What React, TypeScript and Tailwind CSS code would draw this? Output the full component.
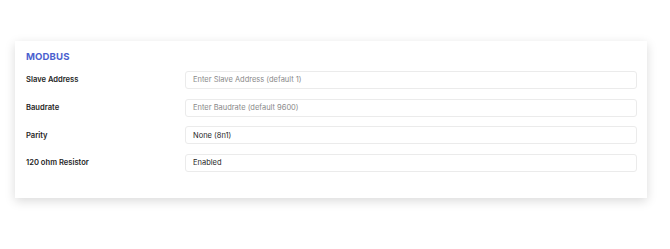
const rows = [
  { label: "Slave Address", value: "", placeholder: "Enter Slave Address (default 1)" },
  { label: "Baudrate", value: "", placeholder: "Enter Baudrate (default 9600)" },
  { label: "Parity", value: "None (8n1)", placeholder: "" },
  { label: "120 ohm Resistor", value: "Enabled", placeholder: "" },
]

export default function App() {
  return (
    <div className="h-[249px] w-[670px] bg-white pt-[41px] pl-[15px] font-['Inter',sans-serif]">
      <div className="w-[632px] bg-white pt-[9px] pr-[10px] pb-[26px] pl-[11px] shadow-[0_3px_10px_rgba(0,0,0,0.15)]">
        <h2 className="mb-[7px] text-[9.6px] leading-[14px] font-bold tracking-[0.1px] text-[#4b61cf]">MODBUS</h2>
        <div className="flex flex-col gap-[9.7px]">
          {rows.map((row) => (
            <div key={row.label} className="flex items-center">
              <label className="w-[159px] shrink-0 text-[7.6px] font-semibold text-[#262626]">
                {row.label}
              </label>
              <div className="flex h-[18px] flex-1 items-center rounded-[3px] border border-[#ebebeb] px-[7px] text-[7.5px]">
                {row.value ? (
                  <span className="text-[#262626]">{row.value}</span>
                ) : (
                  <span className="text-[#8a8a8a]">{row.placeholder}</span>
                )}
              </div>
            </div>
          ))}
        </div>
      </div>
    </div>
  )
}
